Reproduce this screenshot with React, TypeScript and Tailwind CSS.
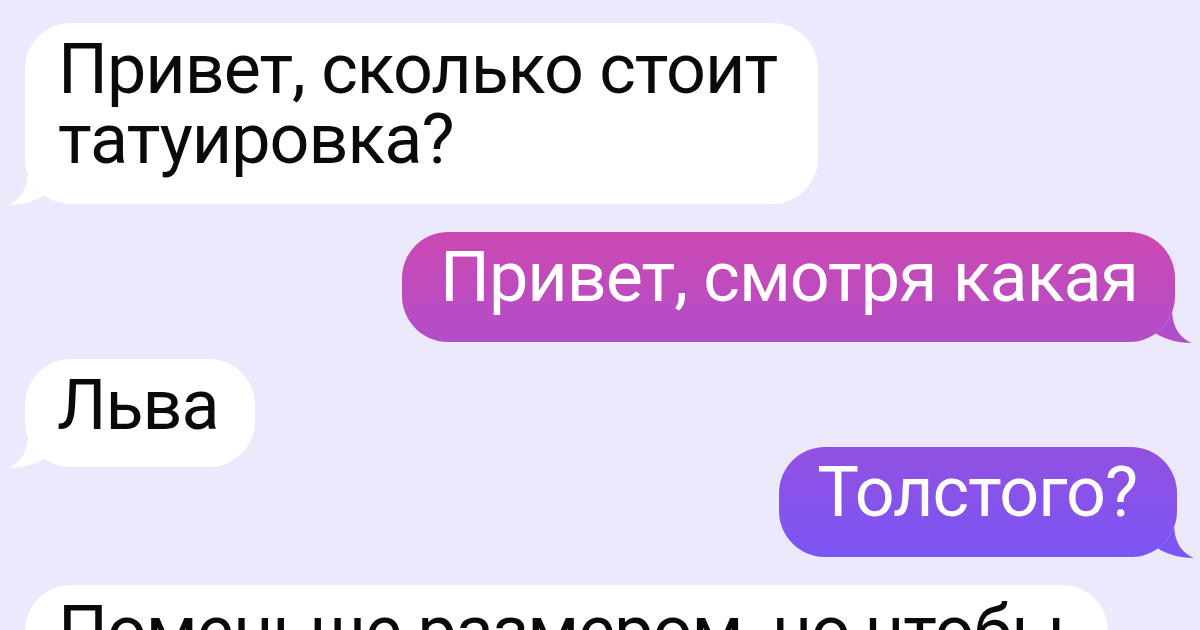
const LEFT_TAIL = "M19.9 0 C19 16 12 26 0 31 C12 31 26 28 37 21 C42 26 50 29 63 30 A46 46 0 0 1 19.9 0 Z";

function Tail({ color, side }: { color: string; side: "left" | "right" }) {
  return (
    <svg
      width="64"
      height="31"
      viewBox="0 0 64 31"
      className={
        side === "left"
          ? "absolute left-[-17px] bottom-[-1px]"
          : "absolute right-[-17px] bottom-[-1px] -scale-x-100"
      }
    >
      <path d={LEFT_TAIL} fill={color} />
    </svg>
  );
}

function Incoming({ text, className }: { text: string; className: string }) {
  return (
    <div className={`relative self-start rounded-[46px] bg-white text-[#0a0a0a] ${className}`}>
      <Tail color="#ffffff" side="left" />
      <p className="relative text-[70px] leading-[70px] tracking-[-1px]">{text}</p>
    </div>
  );
}

function Outgoing({ text, className, bottom }: { text: string; className: string; bottom: string }) {
  return (
    <div className={`relative self-end rounded-[46px] text-white ${className}`}>
      <Tail color={bottom} side="right" />
      <p className="relative text-[70px] leading-[70px] tracking-[-1px]">{text}</p>
    </div>
  );
}

export default function App() {
  return (
    <div
      className="w-[1200px] h-[630px] overflow-hidden bg-[#ECE9FC] flex flex-col pt-[23px] px-[25px]"
      style={{ fontFamily: "Roboto, 'Noto Sans', sans-serif" }}
    >
      <Incoming
        text="Привет, сколько стоит татуировка?"
        className="w-[793px] shrink-0 pl-[33px] pr-[30px] pt-[11px] pb-[30px]"
      />
      <Outgoing
        text="Привет, смотря какая"
        bottom="#B24DC9"
        className="mt-[28px] shrink-0 pl-[38px] pr-[37px] pt-[10px] pb-[30px] bg-gradient-to-b from-[#CC48B1] to-[#B24DC9]"
      />
      <Incoming text="Льва" className="mt-[17px] shrink-0 pl-[32px] pr-[36px] pt-[11px] pb-[27px]" />
      <Outgoing
        text="Толстого?"
        bottom="#7A55F4"
        className="-mt-[20px] shrink-0 mr-[-2px] pl-[38px] pr-[40px] pt-[10px] pb-[30px] bg-gradient-to-b from-[#9250E1] to-[#7A55F4]"
      />
      <Incoming
        text="Поменьше размером, но чтобы"
        className="mt-[28px] w-[1083px] shrink-0 pl-[33px] pr-[30px] pt-[11px] pb-[30px]"
      />
    </div>
  );
}
